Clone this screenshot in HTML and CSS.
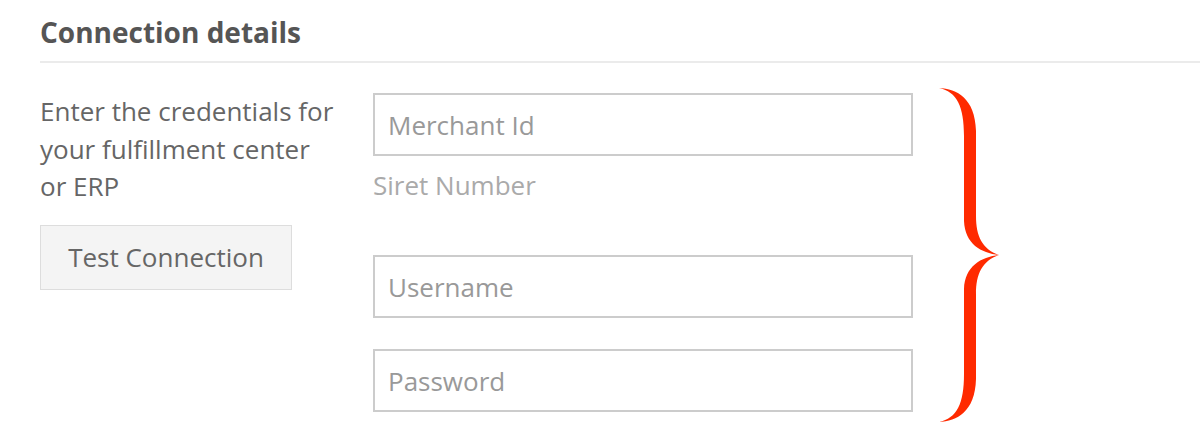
FILE: index.html
```html
<!DOCTYPE html>
<html lang="en">
<head>
    <meta charset="UTF-8">
    <meta name="viewport" content="width=device-width, initial-scale=1.0">
    <title>Connection details</title>
    <link rel="stylesheet" href="styles.css">
</head>
<body>
    <div class="panel">
        <h2 class="panel-title">Connection details</h2>
        <div class="panel-body">
            <div class="intro">
                <p>Enter the credentials for your fulfillment center or ERP</p>
                <button class="test-btn">Test Connection</button>
            </div>
            <div class="fields">
                <div class="field">
                    <input type="text" placeholder="Merchant Id">
                    <div class="hint">Siret Number</div>
                </div>
                <input type="text" placeholder="Username">
                <input type="password" placeholder="Password">
            </div>
            <svg class="brace" width="64" height="340" viewBox="0 0 64 340">
                <path fill="#ff2a00" d="M2,2 C20,3 38,12 39,45 L39,130 C39,150 45,163 62,169 C44,167 28,158 27,135 L27,50 C27,20 20,6 2,2 Z"/>
                <path fill="#ff2a00" d="M2,336 C20,335 38,326 39,293 L39,208 C39,188 45,175 62,169 C44,171 28,180 27,203 L27,288 C27,318 20,332 2,336 Z"/>
            </svg>
        </div>
    </div>
</body>
</html>
```

FILE: styles.css
```css
body {
    font-family: 'Open Sans', sans-serif;
    background-color: #ffffff;
    margin: 0;
    padding: 0;
}

.panel {
    padding-left: 40px;
}

.panel-title {
    margin: 0;
    padding-top: 16px;
    padding-bottom: 13px;
    font-size: 28px;
    line-height: 32px;
    font-weight: 700;
    color: #555;
    border-bottom: 2px solid #ebebeb;
}

.panel-body {
    display: flex;
    align-items: flex-start;
    padding-top: 30px;
}

.intro {
    width: 300px;
    margin-right: 33px;
}

.intro p {
    margin: 0;
    font-size: 26px;
    line-height: 37.5px;
    color: #666;
}

.test-btn {
    margin-top: 19px;
    width: 252px;
    height: 65px;
    background-color: #f4f4f4;
    border: 1px solid #ddd;
    border-radius: 0;
    font-family: 'Open Sans', sans-serif;
    font-size: 26px;
    color: #666;
    cursor: pointer;
}

.fields {
    width: 540px;
    display: flex;
    flex-direction: column;
}

.fields input {
    box-sizing: border-box;
    width: 540px;
    height: 63px;
    padding: 0 13px;
    border: 2px solid #ccc;
    border-radius: 0;
    font-family: 'Open Sans', sans-serif;
    font-size: 26px;
    color: #555;
    outline: none;
}

.fields input::placeholder {
    color: #999;
}

.fields input + input {
    margin-top: 31px;
}

.hint {
    margin-top: 14px;
    margin-bottom: 55px;
    font-size: 26px;
    line-height: 30px;
    color: #aaa;
}

.brace {
    margin-left: 24px;
    margin-top: -7px;
}
```
